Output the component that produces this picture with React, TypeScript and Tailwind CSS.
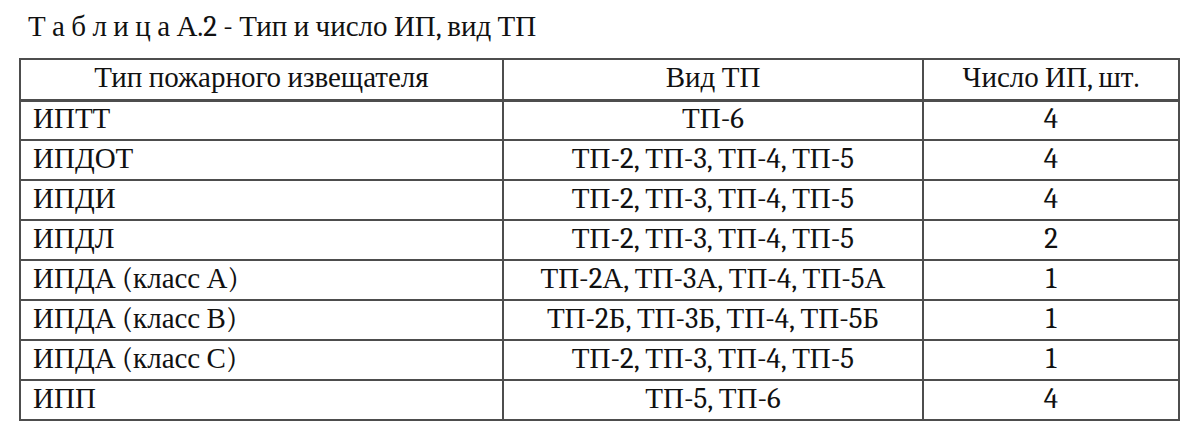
const rows: [string, string, string][] = [
  ["ИПТТ", "ТП-6", "4"],
  ["ИПДОТ", "ТП-2, ТП-3, ТП-4, ТП-5", "4"],
  ["ИПДИ", "ТП-2, ТП-3, ТП-4, ТП-5", "4"],
  ["ИПДЛ", "ТП-2, ТП-3, ТП-4, ТП-5", "2"],
  ["ИПДА (класс А)", "ТП-2А, ТП-3А, ТП-4, ТП-5А", "1"],
  ["ИПДА (класс В)", "ТП-2Б, ТП-3Б, ТП-4, ТП-5Б", "1"],
  ["ИПДА (класс С)", "ТП-2, ТП-3, ТП-4, ТП-5", "1"],
  ["ИПП", "ТП-5, ТП-6", "4"],
];

export default function App() {
  return (
    <div className="h-[444px] w-[1200px] bg-white font-serif text-[#111]">
      <div className="pl-[28px] pt-[7px] text-[29px] leading-[40px]">
        Т а б л и ц а А.2 - Тип и число ИП, вид ТП
      </div>
      <table className="ml-[19px] mt-[11px] w-[1159px] table-fixed border-collapse text-[29px] leading-[34px]">
        <colgroup>
          <col className="w-[483px]" />
          <col className="w-[420px]" />
          <col className="w-[256px]" />
        </colgroup>
        <thead>
          <tr className="h-[41px]">
            <th className="border-2 border-b-[3px] border-[#4d4d4d] border-b-double pb-[3px] text-center font-normal">
              Тип пожарного извещателя
            </th>
            <th className="border-2 border-b-[3px] border-[#4d4d4d] border-b-double pb-[3px] text-center font-normal">
              Вид ТП
            </th>
            <th className="border-2 border-b-[3px] border-[#4d4d4d] border-b-double pb-[3px] text-center font-normal">
              Число ИП, шт.
            </th>
          </tr>
        </thead>
        <tbody>
          {rows.map(([type, tp, n]) => (
            <tr key={type} className="h-[40px]">
              <td className="border-2 border-[#4d4d4d] pb-[3px] pl-[12px] text-left">{type}</td>
              <td className="border-2 border-[#4d4d4d] pb-[3px] text-center">{tp}</td>
              <td className="border-2 border-[#4d4d4d] pb-[3px] text-center">{n}</td>
            </tr>
          ))}
        </tbody>
      </table>
    </div>
  );
}
